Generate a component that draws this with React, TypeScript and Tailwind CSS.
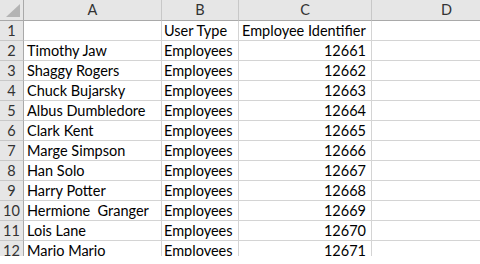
const rows: [string, string, string][] = [
  ['', 'User Type', 'Employee Identifier'],
  ['Timothy Jaw', 'Employees', '12661'],
  ['Shaggy Rogers', 'Employees', '12662'],
  ['Chuck Bujarsky', 'Employees', '12663'],
  ['Albus Dumbledore', 'Employees', '12664'],
  ['Clark Kent', 'Employees', '12665'],
  ['Marge Simpson', 'Employees', '12666'],
  ['Han Solo', 'Employees', '12667'],
  ['Harry Potter', 'Employees', '12668'],
  ['Hermione  Granger', 'Employees', '12669'],
  ['Lois Lane', 'Employees', '12670'],
  ['Mario Mario', 'Employees', '12671'],
];

const cols = ['A', 'B', 'C', 'D'];

export default function App() {
  return (
    <div className="w-[480px] h-[264px] bg-white overflow-hidden" style={ { fontFamily: 'Lato, "Open Sans", sans-serif' } }>
      <div className="h-[256px] overflow-hidden">
        <div className="grid grid-cols-[24px_138px_77px_133px_150px] text-[14.5px] leading-none text-black">
          {/* corner */}
          <div className="h-[21px] bg-[#e6e6e6] border-r border-b border-[#a9a9a9] flex items-end justify-end p-[3px]">
            <svg width="14" height="13" viewBox="0 0 14 13">
              <polygon points="14,0 14,13 0,13" fill="#b4b4b4" />
            </svg>
          </div>
          { cols.map((c) => (
            <div
              key={ c }
              className="h-[21px] bg-[#e6e6e6] border-r border-r-[#c8c8c8] border-b border-b-[#a9a9a9] flex items-center justify-center pt-[1px] text-[#333]"
            >
              { c }
            </div>
          )) }

          { rows.map((r, i) => (
            <div key={ i } className="contents">
              <div className="h-[20px] bg-[#e6e6e6] border-r border-r-[#a9a9a9] border-b border-b-[#c8c8c8] flex items-center justify-center pt-[2px] text-[#333]">
                { i + 1 }
              </div>
              <div className="h-[20px] border-r border-b border-[#d4d4d4] flex items-center pt-[2px] pl-[3px] whitespace-pre">
                { r[0] }
              </div>
              <div className="h-[20px] border-r border-b border-[#d4d4d4] flex items-center pt-[2px] pl-[2px] whitespace-pre">
                { r[1] }
              </div>
              <div
                className={ `h-[20px] border-r border-b border-[#d4d4d4] flex items-center pt-[2px] whitespace-pre ${
                  i === 0 ? 'pl-[3px]' : 'justify-end pr-[5px]'
                }` }
              >
                { r[2] }
              </div>
              <div className="h-[20px] border-b border-[#d4d4d4]" />
            </div>
          )) }
        </div>
      </div>
    </div>
  );
}
